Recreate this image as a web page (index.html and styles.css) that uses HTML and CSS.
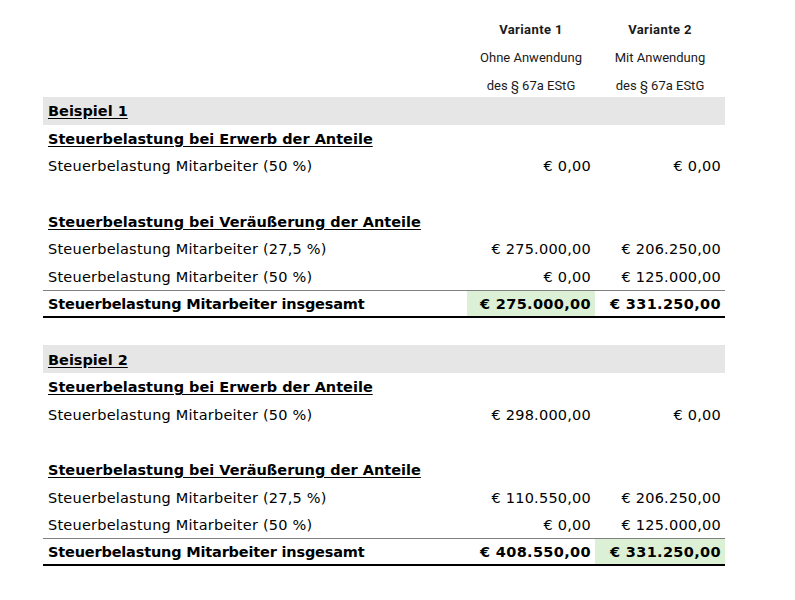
FILE: index.html
```html
<!DOCTYPE html>
<html lang="de">
<head>
<meta charset="utf-8">
<title>Steuerbelastung</title>
<link rel="stylesheet" href="styles.css">
</head>
<body>
<div class="sheet">
  <div class="c"></div><div class="c hd hb">Variante 1</div><div class="c hd hb">Variante 2</div>
  <div class="c"></div><div class="c hd">Ohne Anwendung</div><div class="c hd">Mit Anwendung</div>
  <div class="c"></div><div class="c hd">des § 67a EStG</div><div class="c hd">des § 67a EStG</div>

  <div class="c band lbl"><span class="bu">Beispiel 1</span></div><div class="c band"></div><div class="c band"></div>
  <div class="c lbl"><span class="bu">Steuerbelastung bei Erwerb der Anteile</span></div><div class="c"></div><div class="c"></div>
  <div class="c lbl">Steuerbelastung Mitarbeiter (50 %)</div><div class="c num">€ 0,00</div><div class="c num">€ 0,00</div>
  <div class="c"></div><div class="c"></div><div class="c"></div>
  <div class="c lbl"><span class="bu">Steuerbelastung bei Veräußerung der Anteile</span></div><div class="c"></div><div class="c"></div>
  <div class="c lbl">Steuerbelastung Mitarbeiter (27,5 %)</div><div class="c num">€ 275.000,00</div><div class="c num">€ 206.250,00</div>
  <div class="c lbl">Steuerbelastung Mitarbeiter (50 %)</div><div class="c num">€ 0,00</div><div class="c num">€ 125.000,00</div>
  <div class="c lbl tot b tl">Steuerbelastung Mitarbeiter insgesamt</div><div class="c num tot b tn green">€ 275.000,00</div><div class="c num tot b tn">€ 331.250,00</div>
  <div class="c"></div><div class="c"></div><div class="c"></div>

  <div class="c band lbl"><span class="bu">Beispiel 2</span></div><div class="c band"></div><div class="c band"></div>
  <div class="c lbl"><span class="bu">Steuerbelastung bei Erwerb der Anteile</span></div><div class="c"></div><div class="c"></div>
  <div class="c lbl">Steuerbelastung Mitarbeiter (50 %)</div><div class="c num">€ 298.000,00</div><div class="c num">€ 0,00</div>
  <div class="c"></div><div class="c"></div><div class="c"></div>
  <div class="c lbl"><span class="bu">Steuerbelastung bei Veräußerung der Anteile</span></div><div class="c"></div><div class="c"></div>
  <div class="c lbl">Steuerbelastung Mitarbeiter (27,5 %)</div><div class="c num">€ 110.550,00</div><div class="c num">€ 206.250,00</div>
  <div class="c lbl">Steuerbelastung Mitarbeiter (50 %)</div><div class="c num">€ 0,00</div><div class="c num">€ 125.000,00</div>
  <div class="c lbl tot b tl">Steuerbelastung Mitarbeiter insgesamt</div><div class="c num tot b tn">€ 408.550,00</div><div class="c num tot b tn green">€ 331.250,00</div>
</div>
</body>
</html>
```

FILE: styles.css
```css
html, body {
  margin: 0;
  padding: 0;
  background: #ffffff;
}

.sheet {
  display: grid;
  grid-template-columns: 424px 128px 130px;
  grid-auto-rows: 27.6px;
  margin-left: 43px;
  padding-top: 14.2px;
  font-family: "DejaVu Sans", Verdana, sans-serif;
  font-size: 14.5px;
  letter-spacing: 0.22px;
  color: #000000;
}

.c {
  box-sizing: border-box;
  display: flex;
  align-items: center;
  white-space: nowrap;
  padding-top: 1px;
}

.hd {
  justify-content: center;
  font-family: Roboto, "Liberation Sans", sans-serif;
  font-size: 13px;
  letter-spacing: 0;
  padding-top: 4px;
  color: #1a1a1a;
}

.hb {
  font-weight: bold;
  letter-spacing: 0.4px;
}

.lbl {
  padding-left: 5px;
}

.num {
  justify-content: flex-end;
  padding-right: 4px;
}

.b {
  font-weight: bold;
  letter-spacing: 0;
}

.tl {
  letter-spacing: -0.18px;
}

.tn {
  letter-spacing: 0.35px;
}

.bu {
  font-weight: bold;
  letter-spacing: 0;
  text-decoration: underline;
  text-underline-offset: 2px;
}

.band {
  background: #e7e6e6;
}

.tot {
  border-top: 1px solid #7f7f7f;
  border-bottom: 2px solid #000000;
}

.green {
  background: #dcf0d5;
}
```
